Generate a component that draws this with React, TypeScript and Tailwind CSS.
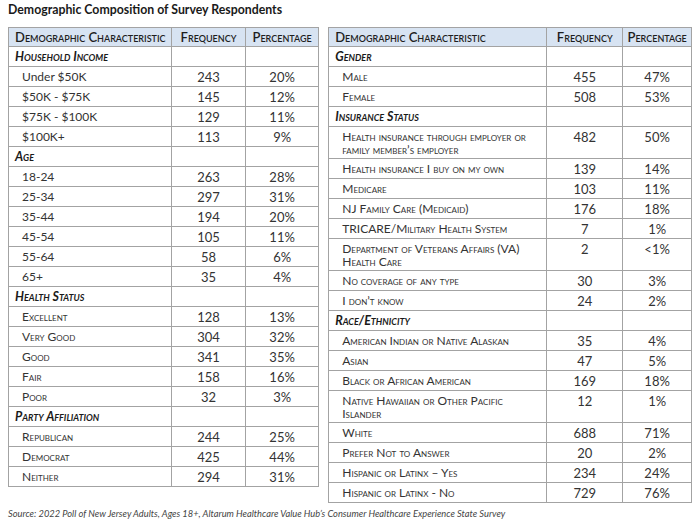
import React from "react";

type Row = { label: string; freq: string; pct: string; caps?: boolean; two?: boolean };
type Group = { title: string; rows: Row[] };

const leftData: Group[] = [
  {
    title: "Household Income",
    rows: [
      { label: "Under $50K", freq: "243", pct: "20%", caps: false },
      { label: "$50K - $75K", freq: "145", pct: "12%", caps: false },
      { label: "$75K - $100K", freq: "129", pct: "11%", caps: false },
      { label: "$100K+", freq: "113", pct: "9%", caps: false },
    ],
  },
  {
    title: "Age",
    rows: [
      { label: "18-24", freq: "263", pct: "28%" },
      { label: "25-34", freq: "297", pct: "31%" },
      { label: "35-44", freq: "194", pct: "20%" },
      { label: "45-54", freq: "105", pct: "11%" },
      { label: "55-64", freq: "58", pct: "6%" },
      { label: "65+", freq: "35", pct: "4%" },
    ],
  },
  {
    title: "Health Status",
    rows: [
      { label: "Excellent", freq: "128", pct: "13%" },
      { label: "Very Good", freq: "304", pct: "32%" },
      { label: "Good", freq: "341", pct: "35%" },
      { label: "Fair", freq: "158", pct: "16%" },
      { label: "Poor", freq: "32", pct: "3%" },
    ],
  },
  {
    title: "Party Affiliation",
    rows: [
      { label: "Republican", freq: "244", pct: "25%" },
      { label: "Democrat", freq: "425", pct: "44%" },
      { label: "Neither", freq: "294", pct: "31%" },
    ],
  },
];

const rightData: Group[] = [
  {
    title: "Gender",
    rows: [
      { label: "Male", freq: "455", pct: "47%" },
      { label: "Female", freq: "508", pct: "53%" },
    ],
  },
  {
    title: "Insurance Status",
    rows: [
      { label: "Health insurance through employer or family member\u2019s employer", freq: "482", pct: "50%", two: true },
      { label: "Health insurance I buy on my own", freq: "139", pct: "14%" },
      { label: "Medicare", freq: "103", pct: "11%" },
      { label: "NJ Family Care (Medicaid)", freq: "176", pct: "18%" },
      { label: "TRICARE/Military Health System", freq: "7", pct: "1%" },
      { label: "Department of Veterans Affairs (VA) Health Care", freq: "2", pct: "<1%", two: true },
      { label: "No coverage of any type", freq: "30", pct: "3%" },
      { label: "I don\u2019t know", freq: "24", pct: "2%" },
    ],
  },
  {
    title: "Race/Ethnicity",
    rows: [
      { label: "American Indian or Native Alaskan", freq: "35", pct: "4%" },
      { label: "Asian", freq: "47", pct: "5%" },
      { label: "Black or African American", freq: "169", pct: "18%" },
      { label: "Native Hawaiian or Other Pacific Islander", freq: "12", pct: "1%", two: true },
      { label: "White", freq: "688", pct: "71%" },
      { label: "Prefer Not to Answer", freq: "20", pct: "2%" },
      { label: "Hispanic or Latinx \u2013 Yes", freq: "234", pct: "24%" },
      { label: "Hispanic or Latinx - No", freq: "729", pct: "76%" },
    ],
  },
];

const cell = "border border-[#a3a3a3] p-0";

function SurveyTable({ data, widths }: { data: Group[]; widths: [string, string, string] }) {
  return (
    <table className={`table-fixed border-collapse ${widths[0]}`}>
      <colgroup>
        <col className={widths[1]} />
        <col className={widths[2]} />
        <col />
      </colgroup>
      <thead>
        <tr className="h-[19px] bg-[#d7e3f2] text-[13px] leading-[16px] font-semibold text-[#1e1e1e] [font-variant:small-caps]">
          <th className={`${cell} pl-[6px] text-left font-semibold`}>Demographic Characteristic</th>
          <th className={`${cell} text-center font-semibold`}>Frequency</th>
          <th className={`${cell} text-center font-semibold`}>Percentage</th>
        </tr>
      </thead>
      <tbody>
        {data.map((g) => (
          <React.Fragment key={g.title}>
            <tr className="h-[20px]">
              <td className={`${cell} pl-[6px] text-[12.5px] leading-[16px] font-bold italic text-[#1a1a1a] [font-variant:small-caps]`}>
                {g.title}
              </td>
              <td className={cell} />
              <td className={cell} />
            </tr>
            {g.rows.map((r) => (
              <tr key={r.label} className={r.two ? "h-[32px]" : "h-[20px]"}>
                <td
                  className={`${cell} pl-[13px] pr-[2px] text-[12px] leading-[13px] text-[#333] ${
                    r.caps === false ? "" : "[font-variant:small-caps]"
                  }`}
                >
                  {r.label}
                </td>
                <td
                  className={`${cell} text-center text-[13px] leading-[16px] text-[#333] ${
                    r.two ? "align-top pt-[2px]" : "align-middle"
                  }`}
                >
                  {r.freq}
                </td>
                <td
                  className={`${cell} text-center text-[13px] leading-[16px] text-[#333] ${
                    r.two ? "align-top pt-[2px]" : "align-middle"
                  }`}
                >
                  {r.pct}
                </td>
              </tr>
            ))}
          </React.Fragment>
        ))}
      </tbody>
    </table>
  );
}

export default function App() {
  return (
    <div className="w-[700px] h-[525px] bg-white px-[8px] pt-[2px] font-['Lato',sans-serif] overflow-hidden">
      <h1 className="text-[12.3px] font-bold text-[#1a1a1a] leading-[16px]">
        Demographic Composition of Survey Respondents
      </h1>
      <div className="mt-[9px] flex items-start gap-[9px]">
        <SurveyTable data={leftData} widths={["w-[314px]", "w-[163px]", "w-[74px]"]} />
        <SurveyTable data={rightData} widths={["w-[367px]", "w-[218px]", "w-[76px]"]} />
      </div>
      <p className="mt-[5px] text-[9.3px] italic text-[#444] leading-[12px]">
        Source: 2022 Poll of New Jersey Adults, Ages 18+, Altarum Healthcare Value Hub&rsquo;s Consumer Healthcare
        Experience State Survey
      </p>
    </div>
  );
}
